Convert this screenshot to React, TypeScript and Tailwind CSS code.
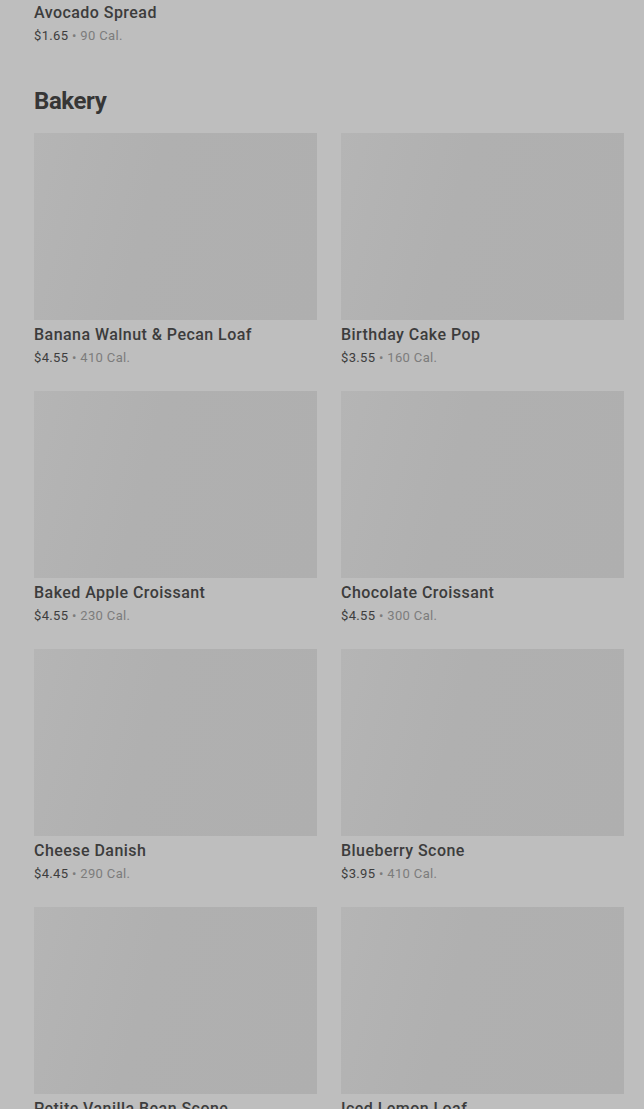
import React from "react";

const items = [
  { name: "Banana Walnut & Pecan Loaf", price: "$4.55", cal: "410 Cal." },
  { name: "Birthday Cake Pop", price: "$3.55", cal: "160 Cal." },
  { name: "Baked Apple Croissant", price: "$4.55", cal: "230 Cal." },
  { name: "Chocolate Croissant", price: "$4.55", cal: "300 Cal." },
  { name: "Cheese Danish", price: "$4.45", cal: "290 Cal." },
  { name: "Blueberry Scone", price: "$3.95", cal: "410 Cal." },
  { name: "Petite Vanilla Bean Scone", price: "$1.95", cal: "120 Cal." },
  { name: "Iced Lemon Loaf", price: "$3.95", cal: "470 Cal." },
];

function Price({ price, cal }: { price: string; cal: string }) {
  return (
    <div className="text-[13px] leading-[20px] tracking-[0.35px] text-[#7c7c7c]">
      <span className="text-[#3d3d3d]">{price}</span> • {cal}
    </div>
  );
}

export default function App() {
  return (
    <div
      className="w-[644px] overflow-hidden bg-[#bebebe] pl-[34px] pr-[20px]"
      style={{ fontFamily: "Roboto, 'Noto Sans', sans-serif", height: 1109 }}
    >
      <div className="pt-[3px]">
        <div className="text-[16px] leading-[20px] font-medium tracking-[0.45px] text-[#3c3c3c]">Avocado Spread</div>
        <div className="mt-[3px]">
          <Price price="$1.65" cal="90 Cal." />
        </div>
      </div>
      <h2 className="mt-[39px] text-[24px] leading-[32px] font-bold tracking-[-0.4px] text-[#363636]">Bakery</h2>
      <div className="mt-[16px] grid grid-cols-2 gap-x-[24px] gap-y-[23px]">
        {items.map((it) => (
          <div key={it.name}>
            <div className="h-[187px] bg-[linear-gradient(105deg,#b5b5b5_0%,#b3b3b3_15%,#b0b0b0_40%,#afafaf_100%)]" />
            <div className="mt-[5px] text-[16px] leading-[20px] font-medium tracking-[0.45px] text-[#3c3c3c]">{it.name}</div>
            <div className="mt-[3px]">
              <Price price={it.price} cal={it.cal} />
            </div>
          </div>
        ))}
      </div>
    </div>
  );
}
